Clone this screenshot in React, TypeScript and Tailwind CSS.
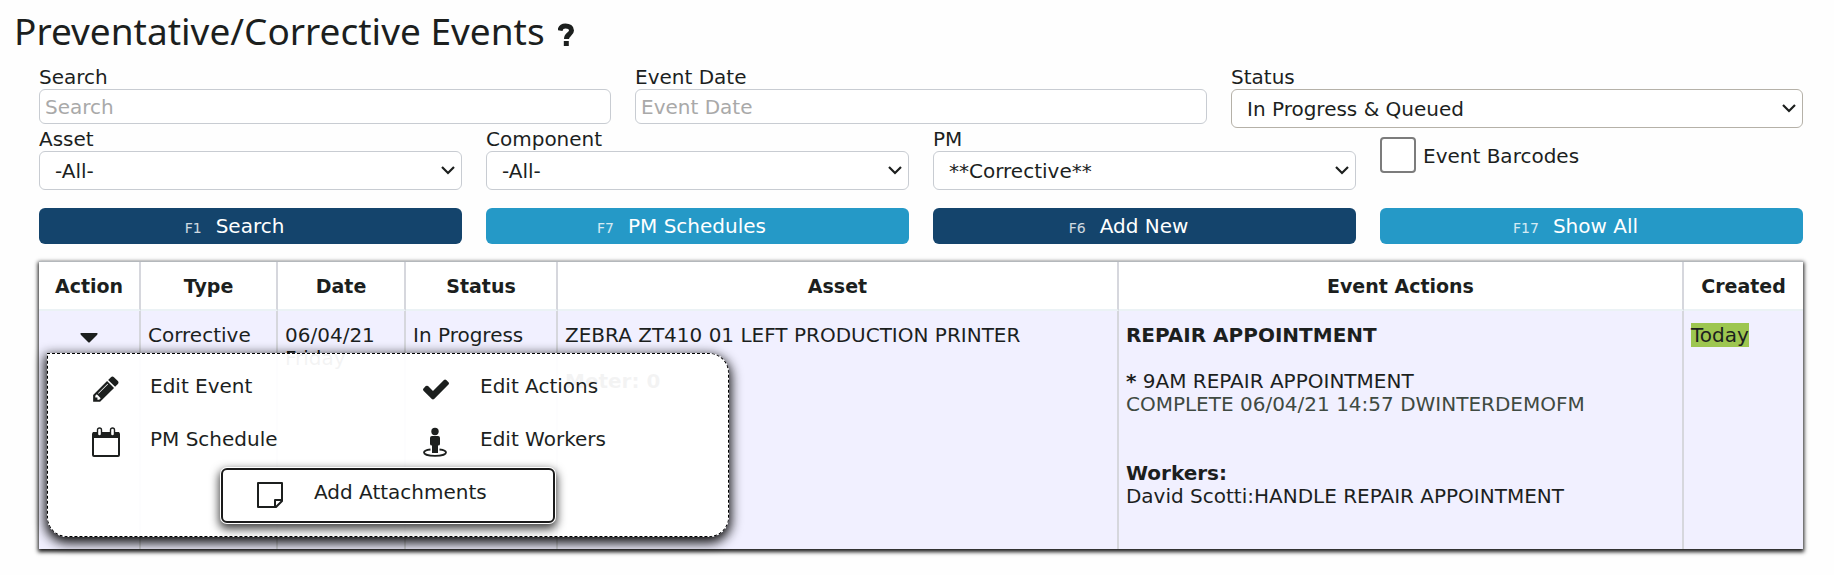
import { useState, type ReactNode } from 'react';
import clsx from 'clsx';

const columns = [
  { label: 'Action', width: 'w-[102px]' },
  { label: 'Type', width: 'w-[137px]' },
  { label: 'Date', width: 'w-[128px]' },
  { label: 'Status', width: 'w-[152px]' },
  { label: 'Asset', width: 'w-[31.8%]' },
  { label: 'Event Actions', width: '' },
  { label: 'Created', width: 'w-[119px]' },
];

const commands = [
  { hotkey: 'F1', label: 'Search', primary: true },
  { hotkey: 'F7', label: 'PM Schedules', primary: false },
  { hotkey: 'F6', label: 'Add New', primary: true },
  { hotkey: 'F17', label: 'Show All', primary: false },
];

function PencilIcon() {
  return (
    <svg viewBox="0 0 1792 1792" className="w-[30px] h-[30px]" fill="currentColor" aria-hidden="true">
      <path d="M491 1536l91-91-235-235-91 91v107h128v128h107zm523-928q0-22-22-22-10 0-17 7l-542 542q-7 7-7 17 0 22 22 22 10 0 17-7l542-542q7-7 7-17zm-54-192l416 416-832 832h-416v-416zm683 96q0 53-37 90l-166 166-416-416 166-165q36-38 90-38 53 0 91 38l235 234q37 39 37 91z" />
    </svg>
  );
}

function CheckIcon() {
  return (
    <svg viewBox="0 0 1792 1792" className="w-[30px] h-[30px]" fill="currentColor" aria-hidden="true">
      <path d="M1671 566q0 40-28 68l-724 724-136 136q-28 28-68 28t-68-28l-136-136-362-362q-28-28-28-68t28-68l136-136q28-28 68-28t68 28l294 295 656-657q28-28 68-28t68 28l136 136q28 28 28 68z" />
    </svg>
  );
}

function CalendarIcon() {
  return (
    <svg viewBox="0 0 30 30" className="w-[30px] h-[30px]" aria-hidden="true">
      <path d="M2 5h26v6H2z" fill="currentColor" />
      <rect x="2" y="6" width="26" height="23" rx="1" fill="none" stroke="currentColor" strokeWidth="2" />
      <rect x="6.500" y="1" width="4" height="8" rx="2" fill="#fff" stroke="currentColor" strokeWidth="1.400" />
      <rect x="19.500" y="1" width="4" height="8" rx="2" fill="#fff" stroke="currentColor" strokeWidth="1.400" />
    </svg>
  );
}

function WorkerIcon() {
  return (
    <svg viewBox="0 0 30 30" className="w-[30px] h-[30px]" fill="currentColor" aria-hidden="true">
      <circle cx="14" cy="4.500" r="3.700" />
      <path d="M11 9h6q2 0 2 2v6q0 1.500-2 1.500V26h-6v-7.500q-2 0-2-1.500v-6q0-2 2-2z" />
      <path
        d="M9.500 22.500C5 23 3 24.300 3 25.500c0 2 5 3.300 11 3.300s11-1.300 11-3.300c0-1.200-2-2.500-6.500-3"
        fill="none"
        stroke="currentColor"
        strokeWidth="1.800"
      />
    </svg>
  );
}

function NoteIcon() {
  return (
    <svg viewBox="0 0 30 30" className="w-[30px] h-[30px]" fill="none" stroke="currentColor" strokeWidth="2" aria-hidden="true">
      <path d="M3 3h24v18l-6 6H3zM27 20h-7v7" strokeLinejoin="round" />
    </svg>
  );
}

const menuItems = [
  { label: 'Edit Event', icon: <PencilIcon /> },
  { label: 'Edit Actions', icon: <CheckIcon /> },
  { label: 'PM Schedule', icon: <CalendarIcon /> },
  { label: 'Edit Workers', icon: <WorkerIcon /> },
];

function TextField({ id, label }: { id: string; label: string }) {
  return (
    <div className="flex flex-col">
      <label htmlFor={id}>{label}</label>
      <input
        id={id}
        type="text"
        placeholder={label}
        className="w-full h-[35px] px-[5px] border border-[#c8ccd2] rounded-md bg-white placeholder:text-[#a9a9a9]"
      />
    </div>
  );
}

function SelectField({ id, label, value, dark }: { id: string; label: string; value: string; dark?: boolean }) {
  return (
    <div className="flex flex-col">
      <label htmlFor={id}>{label}</label>
      <div className="relative">
        <select
          id={id}
          className={clsx(
            'block w-full h-[39px] pl-[15px] pr-8 pt-[2px] border rounded-md bg-white appearance-none',
            dark ? 'border-[#b5b1a8]' : 'border-[#c8ccd2]'
          )}
        >
          <option>{value}</option>
        </select>
        <svg
          viewBox="0 0 14 9"
          className="absolute right-[7px] top-[15px] w-[14px] h-[9px] pointer-events-none"
          fill="none"
          stroke="currentColor"
          strokeWidth="2.200"
          aria-hidden="true"
        >
          <path d="M1 1l6 6 6-6" />
        </svg>
      </div>
    </div>
  );
}

function MenuItem({ label, icon, focused }: { label: string; icon: ReactNode; focused?: boolean }) {
  return (
    <button
      type="button"
      className={clsx(
        'flex w-full text-left',
        focused
          ? 'h-[55px] pl-[32px] bg-white border-2 border-[#1a1a1a] rounded-md shadow-[0_0_0_1px_#fff,0_4px_10px_2px_rgba(0,0,0,0.75)]'
          : 'h-[53px] pl-[33px] rounded-[10px]'
      )}
    >
      <span className={clsx('w-[59px]', focused ? 'pt-[10px]' : 'pt-[12px]')}>{icon}</span>
      <span className={focused ? 'pt-[11px]' : 'pt-[13px]'}>{label}</span>
    </button>
  );
}

function ActionMenu() {
  return (
    <div className="absolute left-[8px] top-[42px] z-10 grid grid-cols-2 w-[682px] px-[10px] pt-[8px] pb-[13px] border border-dashed border-black rounded-[20px] rounded-tl-none bg-white/95 shadow-[0_4px_12px_2px_rgba(0,0,0,0.95)]">
      {menuItems.map((item) => (
        <MenuItem key={item.label} label={item.label} icon={item.icon} />
      ))}
      <div className="col-span-2 w-[334px] mx-auto">
        <MenuItem label="Add Attachments" icon={<NoteIcon />} focused />
      </div>
    </div>
  );
}

export default function App() {
  const [menuOpen, setMenuOpen] = useState(true);

  return (
    <main className="min-h-screen bg-[#fefefe] text-[#1c1f1e] text-[20px] leading-[23px] font-['Verdana','DejaVu_Sans',sans-serif]">
      <h1 className="flex items-center h-[66px] pl-[14px] pb-[6px] text-[37px] font-['Noto_Sans','Open_Sans',sans-serif]">
        Preventative/Corrective Events
        <button type="button" aria-label="Help" className="ml-[13px] pt-[8px]">
          <svg viewBox="0 0 16 23" className="w-[16px] h-[23px]" fill="none" aria-hidden="true">
            <path d="M2 7.500C2.500 4.500 4.500 3 7.500 3 11 3 13.500 4.500 13.500 7.500c0 4-5 3.700-5 8.500" stroke="currentColor" strokeWidth="5" />
            <path d="M5.800 18h5v5h-5z" fill="currentColor" />
          </svg>
        </button>
      </h1>

      <div className="ml-[39px] mr-[31px]">
        <form onSubmit={(e) => e.preventDefault()}>
          <div className="grid grid-cols-3 gap-x-6">
            <TextField id="search" label="Search" />
            <TextField id="event-date" label="Event Date" />
            <SelectField id="status" label="Status" value="In Progress & Queued" dark />
          </div>
          <div className="grid grid-cols-4 gap-x-6">
            <SelectField id="asset" label="Asset" value="-All-" />
            <SelectField id="component" label="Component" value="-All-" />
            <SelectField id="pm" label="PM" value="**Corrective**" />
            <div className="flex items-center gap-[7px] h-[36px] mt-[9px]">
              <input
                id="barcodes"
                type="checkbox"
                className="w-[36px] h-[36px] appearance-none border-2 border-[#7c7c7c] rounded-[4px] bg-white"
              />
              <label htmlFor="barcodes" className="pt-[2px]">Event Barcodes</label>
            </div>
          </div>

          <div className="grid grid-cols-4 gap-x-6 mt-[18px]">
            {commands.map((command) => (
              <button
                key={command.hotkey}
                type="button"
                className={clsx(
                  'flex items-baseline justify-center gap-[14px] h-[36px] pt-[7px] pr-8 rounded-md text-white',
                  command.primary ? 'bg-[#14446c]' : 'bg-[#2599c7]'
                )}
              >
                <span className="text-[14px] text-white/80">{command.hotkey}</span>
                <span>{command.label}</span>
              </button>
            ))}
          </div>
        </form>

        <table className="w-full mt-[17px] table-fixed border-separate border-spacing-0 border-t border-[#b4b8bc] shadow-[0_2px_4px_1px_rgba(0,0,0,0.9)]">
          <thead>
            <tr>
              {columns.map((column) => (
                <th
                  key={column.label}
                  className={clsx(
                    'h-[49px] pt-[2px] bg-white border-b-2 border-b-[#ebf2f5] border-r-2 border-r-[#d6d7dd] last:border-r-0 text-[19px] font-bold',
                    column.width
                  )}
                >
                  {column.label}
                </th>
              ))}
            </tr>
          </thead>
          <tbody>
            <tr className="h-[238px] align-top bg-[#f1f0ff] *:pt-[13px] *:px-[7px] *:border-r-2 *:border-[#d6d7dd] *:last:border-r-0">
              <td className="relative text-center">
                <button
                  type="button"
                  aria-label="Actions"
                  aria-expanded={menuOpen}
                  onClick={() => setMenuOpen(!menuOpen)}
                  className="pt-[9px]"
                >
                  <svg viewBox="0 0 18 10" className="w-[18px] h-[10px]" fill="currentColor" aria-hidden="true">
                    <path d="M1 0h16q1.200 0.500 0 2L10 9q-1 1-2 0L1 2Q-0.200 0.500 1 0z" />
                  </svg>
                </button>
                {menuOpen && <ActionMenu />}
              </td>
              <td>Corrective</td>
              <td>
                06/04/21
                <br />
                Friday
              </td>
              <td>In Progress</td>
              <td>
                ZEBRA ZT410 01 LEFT PRODUCTION PRINTER
                <p className="mt-[23px] font-bold">Meter: 0</p>
              </td>
              <td>
                <p className="font-bold">REPAIR APPOINTMENT</p>
                <p className="mt-[23px]">
                  <b>*</b> 9AM REPAIR APPOINTMENT
                </p>
                <p className="text-[#3f4a42]">COMPLETE 06/04/21 14:57 DWINTERDEMOFM</p>
                <p className="mt-[46px] font-bold">Workers:</p>
                <p>David Scotti:HANDLE REPAIR APPOINTMENT</p>
              </td>
              <td>
                <span className="bg-[#9dc650]">Today</span>
              </td>
            </tr>
          </tbody>
        </table>
      </div>
    </main>
  );
}
